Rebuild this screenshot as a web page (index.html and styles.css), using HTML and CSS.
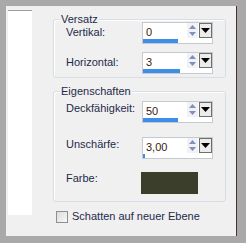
FILE: index.html
```html
<!DOCTYPE html>
<html lang="de">

<head>
    <meta charset="UTF-8">
    <title>Schatten</title>
    <link rel="stylesheet" href="styles.css">
</head>

<body>
    <div class="window">
        <div class="sidebar"></div>

        <div class="main">
            <!-- Versatz -->
            <div class="group">
                <div class="group-title">Versatz</div>
                <div class="rows rows-offset">
                    <div class="row">
                        <span class="label label-low">Vertikal:</span>
                        <div class="spin">
                            <div class="spin-main">
                                <span class="spin-value">0</span>
                                <span class="spin-arrows">
                                    <svg width="9" height="13" viewBox="0 0 9 13"><path d="M4.5 1 L8 5 L1 5 Z" fill="#7d8fc4"/><path d="M1 8 L8 8 L4.5 12 Z" fill="#7d8fc4"/></svg>
                                </span>
                                <span class="spin-drop">
                                    <svg width="9" height="5" viewBox="0 0 9 5"><path d="M0 0 L9 0 L4.5 5 Z" fill="#000"/></svg>
                                </span>
                            </div>
                            <div class="spin-bar"><div class="spin-fill" style="width: 51%"></div></div>
                        </div>
                    </div>
                    <div class="row">
                        <span class="label label-low">Horizontal:</span>
                        <div class="spin">
                            <div class="spin-main">
                                <span class="spin-value">3</span>
                                <span class="spin-arrows">
                                    <svg width="9" height="13" viewBox="0 0 9 13"><path d="M4.5 1 L8 5 L1 5 Z" fill="#7d8fc4"/><path d="M1 8 L8 8 L4.5 12 Z" fill="#7d8fc4"/></svg>
                                </span>
                                <span class="spin-drop">
                                    <svg width="9" height="5" viewBox="0 0 9 5"><path d="M0 0 L9 0 L4.5 5 Z" fill="#000"/></svg>
                                </span>
                            </div>
                            <div class="spin-bar"><div class="spin-fill" style="width: 53%"></div></div>
                        </div>
                    </div>
                </div>
            </div>

            <!-- Eigenschaften -->
            <div class="group group-second">
                <div class="group-title">Eigenschaften</div>
                <div class="rows rows-props">
                    <div class="row">
                        <span class="label">Deckfähigkeit:</span>
                        <div class="spin">
                            <div class="spin-main">
                                <span class="spin-value">50</span>
                                <span class="spin-arrows">
                                    <svg width="9" height="13" viewBox="0 0 9 13"><path d="M4.5 1 L8 5 L1 5 Z" fill="#7d8fc4"/><path d="M1 8 L8 8 L4.5 12 Z" fill="#7d8fc4"/></svg>
                                </span>
                                <span class="spin-drop">
                                    <svg width="9" height="5" viewBox="0 0 9 5"><path d="M0 0 L9 0 L4.5 5 Z" fill="#000"/></svg>
                                </span>
                            </div>
                            <div class="spin-bar"><div class="spin-fill" style="width: 50%"></div></div>
                        </div>
                    </div>
                    <div class="row">
                        <span class="label">Unschärfe:</span>
                        <div class="spin">
                            <div class="spin-main">
                                <span class="spin-value">3,00</span>
                                <span class="spin-arrows">
                                    <svg width="9" height="13" viewBox="0 0 9 13"><path d="M4.5 1 L8 5 L1 5 Z" fill="#7d8fc4"/><path d="M1 8 L8 8 L4.5 12 Z" fill="#7d8fc4"/></svg>
                                </span>
                                <span class="spin-drop">
                                    <svg width="9" height="5" viewBox="0 0 9 5"><path d="M0 0 L9 0 L4.5 5 Z" fill="#000"/></svg>
                                </span>
                            </div>
                            <div class="spin-bar"><div class="spin-fill" style="width: 3%"></div></div>
                        </div>
                    </div>
                    <div class="row row-color">
                        <span class="label label-high">Farbe:</span>
                        <div class="swatch"></div>
                    </div>
                </div>
            </div>

            <label class="check">
                <span class="check-box"></span>
                Schatten auf neuer Ebene
            </label>
        </div>
    </div>
</body>

</html>
```

FILE: styles.css
```css
* {
    box-sizing: border-box;
}

body {
    margin: 0;
    font-family: "Liberation Sans", Arial, sans-serif;
    font-size: 11px;
    line-height: 13px;
    color: #1e2a4a;
    background-color: #a9a9a9;
}

.window {
    width: 246px;
    height: 243px;
    display: flex;
    align-items: flex-start;
    border-style: solid;
    border-color: #a9a9a9;
    border-width: 6px 9px 7px 6px;
    background-color: #f0f0f0;
    box-shadow: inset -1px 0 #4a3232;
}

.sidebar {
    width: 24px;
    height: 205px;
    margin: 4px 0 0 2px;
    background-color: #fff;
    border-top: 1px solid #a0a0a0;
}

.main {
    display: flex;
    flex-direction: column;
    margin-left: 21px;
    padding-top: 13px;
}

.group {
    width: 173px;
    border: 1px solid #d5dfe5;
    border-radius: 3px;
    padding: 0 11px 3px 12px;
    box-shadow: inset 1px 1px #fff;
}

.group-second {
    margin-top: 13px;
    padding-bottom: 7px;
}

.group-title {
    display: table;
    margin: -7px 0 0 -6px;
    padding: 0 1px;
    background-color: #f0f0f0;
}

.rows {
    display: flex;
    flex-direction: column;
}

.rows-offset {
    margin-top: -4px;
    gap: 8px;
}

.rows-props {
    margin-top: 3px;
    gap: 14px;
}

.rows-props .row-color {
    margin-top: -1px;
}

.row {
    display: flex;
    align-items: flex-start;
}

.label {
    width: 76px;
    padding-top: 1px;
}

.label-low {
    padding-top: 4px;
}

.label-high {
    padding-top: 0;
}

/* spin box with value bar */
.spin {
    width: 71px;
    height: 22px;
    border: 1px solid #c5c9d0;
    background-color: #fff;
    display: flex;
    flex-direction: column;
}

.spin-main {
    display: flex;
    align-items: flex-start;
    height: 16px;
}

.spin-value {
    flex: 1;
    padding: 3px 0 0 3px;
    color: #3b1a10;
}

.spin-arrows {
    width: 11px;
    height: 15px;
    display: flex;
    justify-content: center;
    align-items: center;
    background-color: #f2f2f2;
}

.spin-drop {
    width: 13px;
    height: 15px;
    margin: 0 0 0 1px;
    border: 1px solid #6e6e6e;
    background-color: #ececec;
    display: flex;
    justify-content: center;
    align-items: center;
}

.spin-bar {
    margin-top: auto;
    height: 4px;
}

.spin-fill {
    height: 100%;
    background-color: #3d8ee8;
}

.swatch {
    width: 57px;
    height: 22px;
    margin-left: -1px;
    background-color: #3a3e2b;
}

.check {
    display: flex;
    align-items: center;
    gap: 4px;
    margin: 8px 0 0 3px;
}

.check-box {
    width: 12px;
    height: 12px;
    border: 1px solid #8e8f8f;
    background: linear-gradient(135deg, #dcdcdc, #f8f8f8);
}
```
